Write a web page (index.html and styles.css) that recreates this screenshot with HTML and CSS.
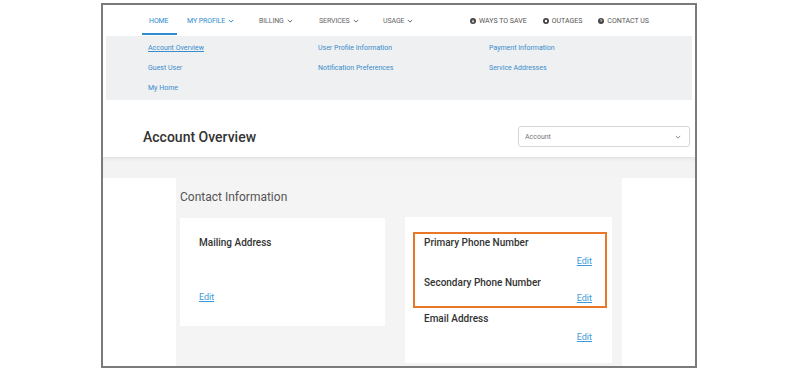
FILE: index.html
```html
<!DOCTYPE html>
<html lang="en">

<head>
    <meta charset="utf-8">
    <meta name="viewport" content="width=device-width, initial-scale=1.0">
    <title>Account Overview</title>
    <link rel="stylesheet" href="styles.css">
</head>

<body>

    <div class="frame">

        <nav class="topnav">
            <div class="mainlinks">
                <a class="navlink aktiv" href="#">HOME</a>
                <a class="navlink blaa" href="#">MY PROFILE <svg class="chev" viewBox="0 0 8 5"><path d="M1 1l3 3 3-3" /></svg></a>
                <a class="navlink" href="#">BILLING <svg class="chev" viewBox="0 0 8 5"><path d="M1 1l3 3 3-3" /></svg></a>
                <a class="navlink" href="#">SERVICES <svg class="chev" viewBox="0 0 8 5"><path d="M1 1l3 3 3-3" /></svg></a>
                <a class="navlink" href="#">USAGE <svg class="chev" viewBox="0 0 8 5"><path d="M1 1l3 3 3-3" /></svg></a>
            </div>
            <div class="utillinks">
                <a href="#"><svg class="ikon" viewBox="0 0 10 10"><circle cx="5" cy="5" r="5" /><path d="M3 5.5h4M5 3v5" stroke="#fff" stroke-width="1.2" /></svg>WAYS TO SAVE</a>
                <a href="#"><svg class="ikon" viewBox="0 0 10 10"><circle cx="5" cy="5" r="5" /><circle cx="5" cy="5" r="2" fill="#fff" /></svg>OUTAGES</a>
                <a href="#"><svg class="ikon" viewBox="0 0 10 10"><circle cx="5" cy="5" r="5" /><path d="M3.6 4a1.4 1.4 0 1 1 1.4 1.4v1" stroke="#fff" stroke-width="1.1" fill="none" /></svg>CONTACT US</a>
            </div>
        </nav>

        <div class="undermenu">
            <div class="kolonne">
                <a class="valgt" href="#">Account Overview</a>
                <a href="#">Guest User</a>
                <a href="#">My Home</a>
            </div>
            <div class="kolonne">
                <a href="#">User Profile Information</a>
                <a href="#">Notification Preferences</a>
            </div>
            <div class="kolonne">
                <a href="#">Payment Information</a>
                <a href="#">Service Addresses</a>
            </div>
        </div>

        <header class="sidehoved">
            <h1>Account Overview</h1>
            <div class="vaelger">
                <span>Account</span>
                <svg class="chev" viewBox="0 0 8 5"><path d="M1 1l3 3 3-3" /></svg>
            </div>
        </header>

        <div class="baand"></div>

        <main class="indhold">
            <h2>Contact Information</h2>
            <div class="kort_con">
                <article class="kort kort_post">
                    <h3>Mailing Address</h3>
                    <a class="edit" href="#">Edit</a>
                </article>
                <article class="kort kort_kontakt">
                    <div class="markering">
                        <h3>Primary Phone Number</h3>
                        <a class="edit" href="#">Edit</a>
                        <h3 class="naeste">Secondary Phone Number</h3>
                        <a class="edit tæt" href="#">Edit</a>
                    </div>
                    <h3 class="email">Email Address</h3>
                    <a class="edit" href="#">Edit</a>
                </article>
            </div>
        </main>

    </div>

</body></html>
```

FILE: styles.css
```css
* {
    box-sizing: border-box;
}

body {
    margin: 0;
    padding: 3px 0 0 101px;
    background-color: white;
    font-family: Roboto, "Liberation Sans", sans-serif;
}

a {
    text-decoration: none;
}

.frame {
    width: 596px;
    height: 365px;
    border: 2px solid #7b7b7b;
    overflow: hidden;
    display: flex;
    flex-direction: column;
}

/* topmenu */

.topnav {
    height: 31px;
    display: flex;
    align-items: center;
    flex-shrink: 0;
}

.mainlinks {
    display: grid;
    grid-template-columns: 45px 72px 60px 64px auto;
    margin-left: 39px;
    height: 100%;
}

.navlink {
    position: relative;
    display: flex;
    align-items: center;
    font-size: 7px;
    color: #666;
    letter-spacing: -0.1px;
}

.navlink:first-child {
    padding-left: 7px;
}

.aktiv, .blaa {
    color: #2f8cce;
}

.aktiv::after {
    content: "";
    position: absolute;
    left: 0;
    bottom: 1px;
    width: 35px;
    height: 2px;
    background-color: #2f8cce;
}

.chev {
    width: 6px;
    height: 4px;
    margin-left: 3px;
    fill: none;
    stroke: currentColor;
    stroke-width: 1.3;
}

.utillinks {
    margin-left: auto;
    padding-right: 46px;
    display: flex;
    gap: 16px;
}

.utillinks a {
    display: flex;
    align-items: center;
    font-size: 7px;
    color: #555;
}

.ikon {
    width: 6px;
    height: 6px;
    margin-right: 3px;
    fill: #444;
}

/* undermenu */

.undermenu {
    margin: 0 3px;
    height: 64px;
    flex-shrink: 0;
    background-color: #eef0f2;
    padding: 2px 0 0 42px;
    display: grid;
    grid-template-columns: 170px 171px auto;
}

.kolonne {
    display: flex;
    flex-direction: column;
}

.kolonne a {
    font-size: 7px;
    line-height: 20px;
    color: #3a8ccb;
}

.kolonne .valgt {
    text-decoration: underline;
}

/* sidehoved */

.sidehoved {
    height: 57px;
    flex-shrink: 0;
    padding: 16px 5px 0 40px;
    display: flex;
    align-items: center;
    justify-content: space-between;
}

h1 {
    margin: 0;
    font-size: 14px;
    font-weight: 500;
    color: #333;
}

.vaelger {
    width: 172px;
    height: 21px;
    border: 1px solid #d6d6d6;
    border-radius: 3px;
    padding: 0 8px 0 6px;
    display: flex;
    align-items: center;
    justify-content: space-between;
    font-size: 7px;
    color: #777;
}

.vaelger .chev {
    color: #888;
}

.baand {
    height: 21px;
    flex-shrink: 0;
    background-color: #f3f3f3;
    box-shadow: inset 0 3px 4px -2px rgba(0, 0, 0, 0.1);
}

/* indhold */

.indhold {
    flex: 1;
    width: 446px;
    margin-left: 73px;
    padding: 12px 0 0 4px;
    background-color: #f4f4f4;
}

h2 {
    margin: 0;
    font-size: 12px;
    line-height: 14px;
    font-weight: 400;
    color: #555;
}

.kort_con {
    margin-top: 14px;
    display: flex;
    gap: 20px;
    align-items: flex-start;
}

.kort {
    background-color: white;
    display: flex;
    flex-direction: column;
}

h3 {
    margin: 0;
    font-size: 10px;
    line-height: 12px;
    font-weight: 500;
    color: #333;
}

.edit {
    font-size: 9px;
    line-height: 12px;
    color: #3d9ad8;
    text-decoration: underline;
}

.kort_post {
    width: 205px;
    height: 108px;
    padding: 19px 0 23px 19px;
}

.kort_post .edit {
    margin-top: auto;
}

.kort_kontakt {
    width: 207px;
    height: 146px;
    margin-top: -1px;
    padding: 15px 20px 0 19px;
}

.markering {
    margin: 0 -15px 0 -11px;
    border: 2px solid #e8772a;
    padding: 3px 13px 2px 9px;
    display: flex;
    flex-direction: column;
}

.kort_kontakt .edit {
    align-self: flex-end;
    margin-top: 6px;
}

.kort_kontakt .naeste {
    margin-top: 10px;
}

.kort_kontakt .tæt {
    margin-top: 3px;
}

.email {
    margin-top: 5px;
}
```
